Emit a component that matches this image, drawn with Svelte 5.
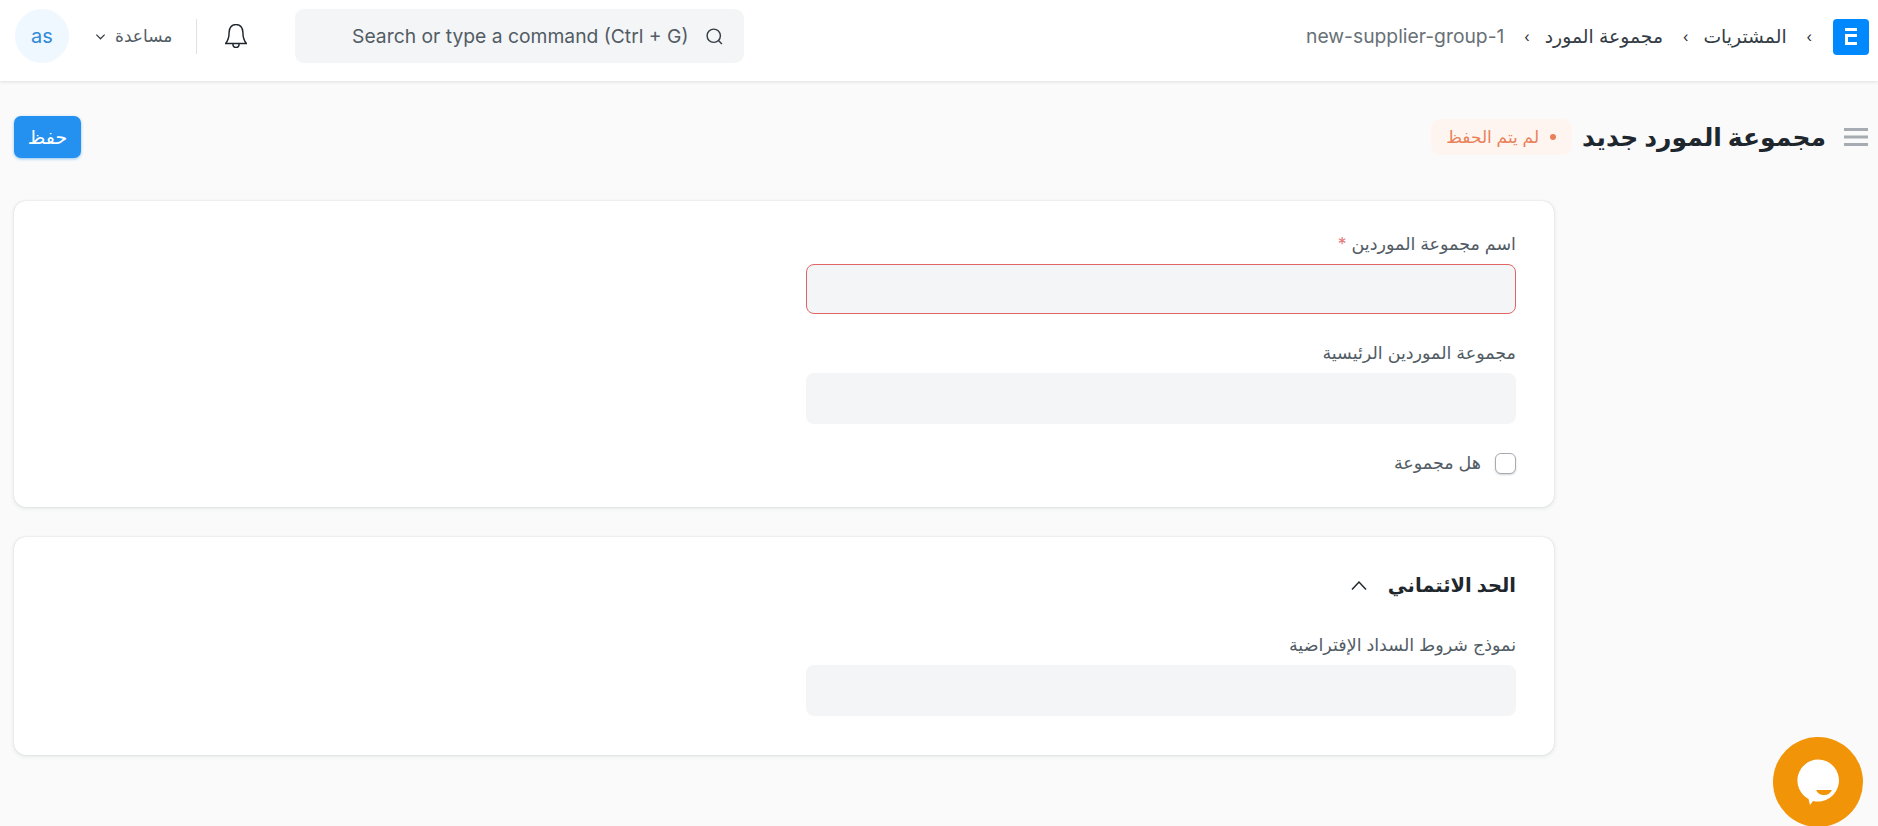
<script lang="ts">
  // نموذج مجموعة مورد جديد
  const crumbs = ["المشتريات", "مجموعة المورد"];
</script>

<div class="page" dir="rtl">
  <header class="navbar">
    <svg class="logo" viewBox="0 0 36 36" aria-hidden="true">
      <rect width="36" height="36" rx="4" fill="#0089ff" />
      <path d="M12 9h12v3H12zM12 15h12v3h-9v5h9v3H12z" fill="#fff" />
    </svg>
    <nav class="crumbs">
      {#each crumbs as c}
        <span class="sep">›</span>
        <span class="crumb">{c}</span>
      {/each}
      <span class="sep">›</span>
      <span class="crumb current" dir="ltr">new-supplier-group-1</span>
    </nav>

    <div class="search" dir="ltr">
      <span class="placeholder">Search or type a command (Ctrl + G)</span>
      <svg class="ico-search" viewBox="0 0 20 20" aria-hidden="true">
        <circle cx="9.2" cy="9.2" r="7" />
        <path d="M14.2 14.2l3.6 3.6" />
      </svg>
    </div>
    <svg class="bell" viewBox="1.5 2 21 23" aria-hidden="true">
      <path d="M12 2.500c-4.200 0-6.600 3.400-6.600 7.400 0 5.400-1.200 8.300-3.400 10.800h20c-2.200-2.500-3.400-5.400-3.400-10.800 0-4-2.400-7.400-6.600-7.400z" />
      <path d="M9 20.700c0 2.200 1.300 3.800 3 3.800s3-1.600 3-3.800" />
    </svg>
    <div class="vline"></div>
    <div class="help">
      <span>مساعدة</span>
      <svg viewBox="0 0 12 12" aria-hidden="true"><path d="M1.500 4l4.500 4.500 4.500-4.500" /></svg>
    </div>
    <div class="avatar" dir="ltr">as</div>
  </header>

  <div class="titlebar">
    <svg class="burger" viewBox="0 0 24 18" aria-hidden="true">
      <path d="M0 1.500h24M0 9h24M0 16.500h24" />
    </svg>
    <h1>مجموعة المورد جديد</h1>
    <span class="badge"><i></i>لم يتم الحفظ</span>
    <button class="save">حفظ</button>
  </div>

  <main>
    <section class="card first">
      <div class="col">
        <div class="field">
          <span class="label">اسم مجموعة الموردين <em>*</em></span>
          <div class="input error"></div>
        </div>
        <div class="field">
          <span class="label">مجموعة الموردين الرئيسية</span>
          <div class="input"></div>
        </div>
        <label class="check">
          <span class="box"></span>
          <span class="label">هل مجموعة</span>
        </label>
      </div>
    </section>

    <section class="card second">
      <div class="col">
        <div class="sechead">
          <h2>الحد الائتماني</h2>
          <svg viewBox="0 0 18 12" aria-hidden="true"><path d="M2 10.500l7-7.500 7 7.500" /></svg>
        </div>
        <div class="field">
          <span class="label">نموذج شروط السداد الإفتراضية</span>
          <div class="input"></div>
        </div>
      </div>
    </section>
  </main>

  <div class="chat">
    <svg viewBox="0 0 44 48" aria-hidden="true">
      <path d="M22 1.500a21 21 0 1 1-5 41.400L14 47l-1.500-6A21 21 0 0 1 22 1.500z" fill="#fff" />
      <path d="M20 32h16c-1.500 3-4 5-8 5s-6.500-2-8-5z" fill="#f29408" />
    </svg>
  </div>
</div>

<style>
  :global(body) {
    margin: 0;
    background: #fafafa;
    font-family: Inter, "DejaVu Sans", sans-serif;
    overflow: hidden;
  }
  .page {
    position: relative;
    height: 826px;
    overflow: hidden;
    color: #1f272e;
  }
  .navbar {
    display: flex;
    align-items: center;
    height: 81px;
    box-sizing: border-box;
    padding: 0 9px 9px 15px;
    background: #fff;
    box-shadow: 0 1px 3px rgba(25, 39, 52, 0.12);
  }
  .logo {
    width: 36px;
    height: 36px;
    flex: none;
    margin-top: 2px;
  }
  .crumbs {
    display: flex;
    align-items: center;
    margin-right: 6px;
    font-size: 18.8px;
    color: #333c44;
  }
  .sep {
    margin: 0 15px 0 20px;
    font-size: 14px;
    color: #1f272e;
  }
  .current {
    font-size: 19.3px;
    color: #687178;
  }
  .search {
    display: flex;
    align-items: center;
    justify-content: flex-end;
    gap: 17px;
    width: 449px;
    height: 54px;
    box-sizing: border-box;
    padding: 0 20px;
    margin-right: auto;
    background: #f4f5f6;
    border-radius: 9px;
    font-size: 19.3px;
    color: #525c65;
  }
  .ico-search {
    width: 19px;
    height: 19px;
    flex: none;
    fill: none;
    stroke: #333c44;
    stroke-width: 1.500;
  }
  .bell {
    width: 22px;
    height: 24px;
    flex: none;
    margin: 0 48px 0 28px;
    fill: none;
    stroke: #1f272e;
    stroke-width: 1.400;
  }
  .vline {
    width: 1px;
    height: 35px;
    background: #dfe2e5;
  }
  .help {
    display: flex;
    align-items: center;
    gap: 9px;
    margin: 0 24px 0 26px;
    font-size: 17px;
    color: #525c65;
  }
  .help svg {
    width: 11px;
    height: 11px;
    fill: none;
    stroke: #333c44;
    stroke-width: 1.300;
  }
  .avatar {
    display: flex;
    align-items: center;
    justify-content: center;
    width: 54px;
    height: 54px;
    border-radius: 50%;
    background: #eff7ff;
    color: #318ad8;
    font-size: 20px;
  }
  .titlebar {
    display: flex;
    align-items: center;
    height: 42px;
    margin-top: 35px;
    padding: 0 10px 0 14px;
  }
  .burger {
    width: 24px;
    height: 18px;
    flex: none;
    fill: none;
    stroke: #a6acb2;
    stroke-width: 3;
  }
  h1 {
    margin: 0 18px 0 0;
    font-size: 25px;
    font-weight: 700;
    color: #1f272e;
    white-space: nowrap;
  }
  .badge {
    display: flex;
    align-items: center;
    gap: 11px;
    height: 36px;
    margin-right: 10px;
    padding: 0 16px 0 15px;
    border-radius: 9px;
    background: #fff5f0;
    color: #e8815a;
    font-size: 17px;
  }
  .badge i {
    width: 6px;
    height: 6px;
    border-radius: 50%;
    background: #e8815a;
  }
  .save {
    width: 67px;
    height: 42px;
    margin-right: auto;
    padding: 0;
    border: none;
    border-radius: 7px;
    background: #2490ef;
    color: #fff;
    font: inherit;
    font-size: 19px;
    box-shadow: 0 1px 3px rgba(36, 144, 239, 0.5);
  }
  main {
    display: flex;
    flex-direction: column;
    gap: 30px;
    width: 1540px;
    margin: 43px 324px 0 14px;
  }
  .card {
    box-sizing: border-box;
    padding: 0 38px;
    background: #fff;
    border-radius: 12px;
    box-shadow: 0 0 1px rgba(25, 39, 52, 0.2), 0 1px 4px rgba(25, 39, 52, 0.12);
  }
  .first {
    height: 306px;
    padding-top: 31px;
  }
  .second {
    height: 218px;
    padding-top: 32px;
  }
  .col {
    display: flex;
    flex-direction: column;
    width: 710px;
  }
  .field {
    display: flex;
    flex-direction: column;
    gap: 8px;
    margin-bottom: 27px;
  }
  .label {
    font-size: 17.5px;
    line-height: 24px;
    color: #525c65;
  }
  em {
    font-style: normal;
    color: #e57a7a;
  }
  .input {
    height: 51px;
    box-sizing: border-box;
    background: #f4f5f6;
    border-radius: 8px;
  }
  .error {
    height: 50px;
    border: 1px solid #e06666;
  }
  .check {
    display: flex;
    align-items: center;
    gap: 14px;
  }
  .box {
    width: 21px;
    height: 21px;
    box-sizing: border-box;
    background: #fff;
    border: 1px solid #a6acb2;
    border-radius: 6px;
    box-shadow: 0 1px 2px rgba(25, 39, 52, 0.2);
  }
  .sechead {
    display: flex;
    align-items: center;
    gap: 20px;
    height: 32px;
    margin-bottom: 32px;
  }
  h2 {
    margin: 0;
    font-size: 19.5px;
    font-weight: 600;
    color: #1f272e;
  }
  .sechead svg {
    width: 18px;
    height: 12px;
    fill: none;
    stroke: #1f272e;
    stroke-width: 1.500;
  }
  .chat {
    position: absolute;
    left: 1773px;
    top: 737px;
    display: flex;
    align-items: center;
    justify-content: center;
    width: 90px;
    height: 90px;
    border-radius: 50%;
    background: #f29408;
  }
  .chat svg {
    width: 44px;
    height: 48px;
  }
</style>
